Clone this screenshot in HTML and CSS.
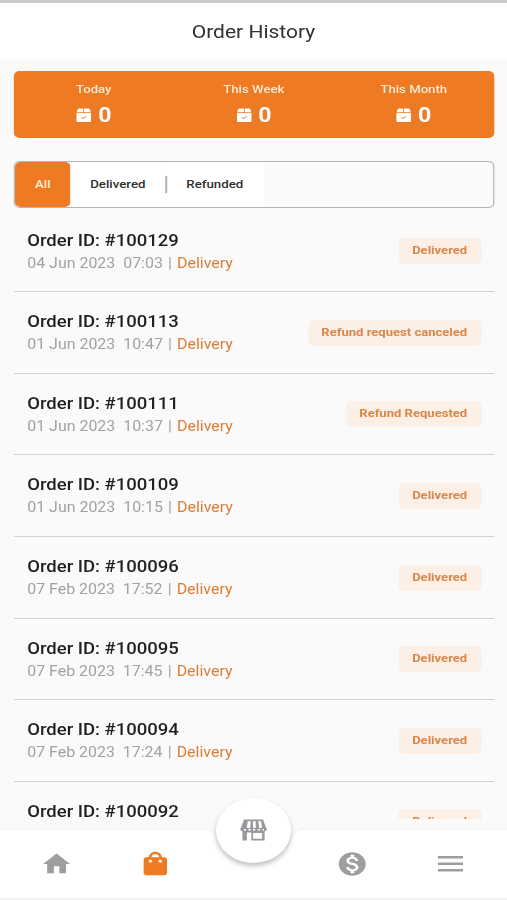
FILE: index.html
```html
<!DOCTYPE html>
<html lang="en">
<head>
  <meta charset="UTF-8" />
  <meta name="viewport" content="width=device-width, initial-scale=1.0" />
  <title>Order History</title>
  <link rel="stylesheet" href="styles.css">
</head>
<body>
  <svg class="sprite" width="0" height="0">
    <symbol id="box" viewBox="0 0 14 15">
      <path fill="#fff" d="M2.400 0h4.200v4H0.300L1.300 1Q1.600 0 2.400 0zM7.400 0h4.200q.8 0 1.100 1l1 3H7.400zM0 4.700h14v8.600q0 1.200-1.200 1.200H1.200Q0 14.500 0 13.300z"/>
      <path fill="none" stroke="#ee9a5c" stroke-width="1" d="M4.900 9.500l1.500 1.400L9.400 8"/>
    </symbol>
  </svg>

  <div class="app">
    <header class="header">
      <h1>Order History</h1>
    </header>

    <section class="summary">
      <div class="stat">
        <div class="stat-label">Today</div>
        <div class="stat-value"><svg><use href="#box"/></svg><span>0</span></div>
      </div>
      <div class="stat">
        <div class="stat-label">This Week</div>
        <div class="stat-value"><svg><use href="#box"/></svg><span>0</span></div>
      </div>
      <div class="stat">
        <div class="stat-label">This Month</div>
        <div class="stat-value"><svg><use href="#box"/></svg><span>0</span></div>
      </div>
    </section>

    <div class="tabs">
      <div class="tab active">All</div>
      <div class="tab delivered">Delivered</div>
      <div class="divider"></div>
      <div class="tab refunded">Refunded</div>
    </div>

    <main class="orders">
      <div class="order">
        <div><h2>Order ID: #100129</h2><p>04 Jun 2023&nbsp; 07:03 <i>|</i> <b>Delivery</b></p></div>
        <span class="badge">Delivered</span>
      </div>
      <div class="order">
        <div><h2>Order ID: #100113</h2><p>01 Jun 2023&nbsp; 10:47 <i>|</i> <b>Delivery</b></p></div>
        <span class="badge">Refund request canceled</span>
      </div>
      <div class="order">
        <div><h2>Order ID: #100111</h2><p>01 Jun 2023&nbsp; 10:37 <i>|</i> <b>Delivery</b></p></div>
        <span class="badge">Refund Requested</span>
      </div>
      <div class="order">
        <div><h2>Order ID: #100109</h2><p>01 Jun 2023&nbsp; 10:15 <i>|</i> <b>Delivery</b></p></div>
        <span class="badge">Delivered</span>
      </div>
      <div class="order">
        <div><h2>Order ID: #100096</h2><p>07 Feb 2023&nbsp; 17:52 <i>|</i> <b>Delivery</b></p></div>
        <span class="badge">Delivered</span>
      </div>
      <div class="order">
        <div><h2>Order ID: #100095</h2><p>07 Feb 2023&nbsp; 17:45 <i>|</i> <b>Delivery</b></p></div>
        <span class="badge">Delivered</span>
      </div>
      <div class="order">
        <div><h2>Order ID: #100094</h2><p>07 Feb 2023&nbsp; 17:24 <i>|</i> <b>Delivery</b></p></div>
        <span class="badge">Delivered</span>
      </div>
      <div class="order">
        <div><h2>Order ID: #100092</h2></div>
        <span class="badge">Delivered</span>
      </div>
    </main>

    <nav class="nav">
      <svg class="nav-shape" viewBox="0 0 439 68">
        <path d="M0 0H176C184 0 186 4 188 10A35 35 0 0 0 252 10C254 4 256 0 264 0H439V68H0z"/>
      </svg>
      <a class="nav-item home"><svg viewBox="0 0 24 24"><path d="M10 20v-6h4v6h5v-8h3L12 3 2 12h3v8z"/></svg></a>
      <a class="nav-item current">
        <svg viewBox="0 0 24 24">
          <path d="M19 6h-2c0-2.760-2.240-5-5-5S7 3.240 7 6H5c-1.100 0-2 .9-2 2v12c0 1.100.9 2 2 2h14c1.100 0 2-.9 2-2V8c0-1.100-.9-2-2-2zm-7-3c1.660 0 3 1.340 3 3H9c0-1.660 1.340-3 3-3z"/>
          <g class="dots"><circle cx="8.200" cy="9.400" r="1.400"/><circle cx="15.800" cy="9.400" r="1.400"/></g>
        </svg>
      </a>
      <a class="nav-item fab-slot"></a>
      <a class="nav-item wallet"><svg viewBox="0 0 24 24"><path d="M12 2C6.480 2 2 6.480 2 12s4.480 10 10 10 10-4.480 10-10S17.520 2 12 2zm1.410 16.090V20h-2.670v-1.930c-1.710-.36-3.160-1.460-3.270-3.400h1.960c.1 1.050.82 1.870 2.650 1.870 1.960 0 2.400-.98 2.400-1.590 0-.83-.44-1.610-2.670-2.140-2.480-.6-4.180-1.620-4.180-3.670 0-1.720 1.390-2.840 3.110-3.210V4h2.670v1.950c1.860.45 2.790 1.860 2.850 3.390H14.300c-.05-1.110-.64-1.870-2.220-1.870-1.500 0-2.400.68-2.400 1.640 0 .84.65 1.390 2.670 1.910s4.180 1.390 4.180 3.910c-.01 1.830-1.380 2.830-3.120 3.160z"/></svg></a>
      <a class="nav-item menu"><svg viewBox="0 0 22 16"><path d="M0 0h22v2.500H0zM0 6.500h22V9H0zM0 13h22v2.500H0z"/></svg></a>

      <div class="fab">
        <svg viewBox="0 0 24 22">
          <path d="M3 0h18v1.800H3zM3 1.500h3.800L5.700 10.500H0zM9.600 1.500h1.900v9H8.800zM14 1.500h2.300l1 9h-3.300zM18.800 1.500H21l3 9h-4.200z"/>
          <path d="M0 9h24v1.500q-1 2-2.500 2H2.500Q1 12.500 0 10.500z"/>
          <path fill-rule="evenodd" d="M2 12h20v10H10v-8.500H6V22H2zM11.500 14v6h8.300v-6z"/>
          <path class="scallop" d="M3.200 10.800h2M7.400 10.800h2M11.600 10.800h2M15.800 10.800h2M20 10.800h1.500"/>
        </svg>
      </div>
    </nav>
    <div class="footer"></div>
  </div>
</body>
</html>
```

FILE: styles.css
```css
* {
  box-sizing: border-box;
}

body {
  margin: 0;
  overflow: hidden;
  background: #fafafa;
  font-family: Roboto, "Noto Sans", sans-serif;
}

.sprite {
  display: block;
}

.app {
  width: 439px;
  height: 900px;
  display: flex;
  flex-direction: column;
  transform: scaleX(1.155);
  transform-origin: 0 0;
}

.header {
  height: 60px;
  flex: none;
  background: #fff;
  border-top: 3px solid #cbcbcb;
  display: flex;
  align-items: center;
  justify-content: center;
}

h1 {
  margin: 0;
  font-size: 18.200px;
  font-weight: 400;
  color: #303030;
}

.summary {
  height: 67px;
  flex: none;
  margin: 11px 11.500px 0 12px;
  border-radius: 5px;
  background: #ee7a23;
  color: #fff;
  display: grid;
  grid-template-columns: repeat(3, 1fr);
}

.stat {
  text-align: center;
  padding-top: 10px;
}

.stat-label {
  font-size: 11.400px;
  line-height: 16px;
  font-weight: 500;
  color: #ffe9d3;
}

.stat-value {
  display: flex;
  align-items: center;
  justify-content: center;
  gap: 6px;
  font-size: 20px;
  line-height: 26px;
  font-weight: 700;
  margin-top: 5px;
}

.stat-value svg {
  width: 13px;
  height: 15px;
}

.tabs {
  height: 47px;
  flex: none;
  margin: 23px 11.500px 0 12px;
  border: 1.500px solid #b4b4b4;
  border-radius: 5px;
  display: flex;
  align-items: stretch;
  overflow: hidden;
  font-size: 11.500px;
  font-weight: 500;
  color: #303030;
}

.tab {
  display: flex;
  align-items: center;
  justify-content: center;
  background: #fff;
  padding-bottom: 1px;
}

.tab.active {
  width: 48px;
  background: #ee7a23;
  color: #fff0df;
  border-radius: 5px;
}

.tab.delivered {
  width: 82px;
}

.tab.refunded {
  width: 84px;
  padding-right: 2px;
}

.divider {
  width: 2px;
  background: linear-gradient(#b4b4b4, #b4b4b4) center / 100% 17px no-repeat #fff;
}

.orders {
  height: 608.500px;
  flex: none;
  overflow: hidden;
  margin: 2.500px 11.500px 0 12px;
}

.order {
  height: 81.650px;
  padding: 18px 11px 0 11.600px;
  border-bottom: 1px solid #d2d2d2;
  display: flex;
  justify-content: space-between;
  align-items: flex-start;
}

h2 {
  margin: 0;
  font-size: 16px;
  line-height: 23px;
  font-weight: 500;
  color: #1f1f1f;
}

p {
  margin: 0;
  font-size: 13.800px;
  line-height: 23px;
  color: #a2a2a2;
}

p i {
  font-style: normal;
  margin: 0 1px;
}

p b {
  font-weight: 400;
  color: #dd7c35;
}

.badge {
  margin-top: 9.500px;
  height: 26px;
  padding: 0 12px 0 11.500px;
  border-radius: 5px;
  background: #fcefe5;
  color: #d9874a;
  font-size: 11.300px;
  line-height: 25px;
  font-weight: 700;
}

.nav {
  position: relative;
  height: 67px;
  flex: none;
  margin-top: 11px;
  padding: 0 6px;
  display: grid;
  grid-template-columns: repeat(5, 1fr);
}

.nav-shape {
  position: absolute;
  inset: 0;
  width: 439px;
  height: 68px;
  fill: #fff;
  filter: drop-shadow(0 -1px 1px rgba(0, 0, 0, 0.03));
}

.nav-item {
  position: relative;
  display: flex;
  align-items: center;
  justify-content: center;
}

.nav-item svg {
  width: 28px;
  height: 28px;
  fill: #9e9e9e;
}

.nav-item.current svg {
  width: 27px;
  height: 28px;
  fill: #ee7a23;
}

.nav-item.menu svg {
  width: 22px;
  height: 16px;
}

.nav-item .dots {
  fill: #fff0df;
}

.fab {
  position: absolute;
  left: 187.200px;
  top: -32.500px;
  width: 65px;
  height: 65px;
  border-radius: 50%;
  background: #fff;
  box-shadow: 0 3px 5px rgba(0, 0, 0, 0.26);
  display: flex;
  align-items: center;
  justify-content: center;
}

.fab svg {
  width: 23px;
  height: 22px;
  fill: #98999d;
}

.fab .scallop {
  fill: none;
  stroke: #fff;
  stroke-width: 1.500;
}

.footer {
  height: 3px;
  flex: none;
  background: #f3f3f3;
}
```
